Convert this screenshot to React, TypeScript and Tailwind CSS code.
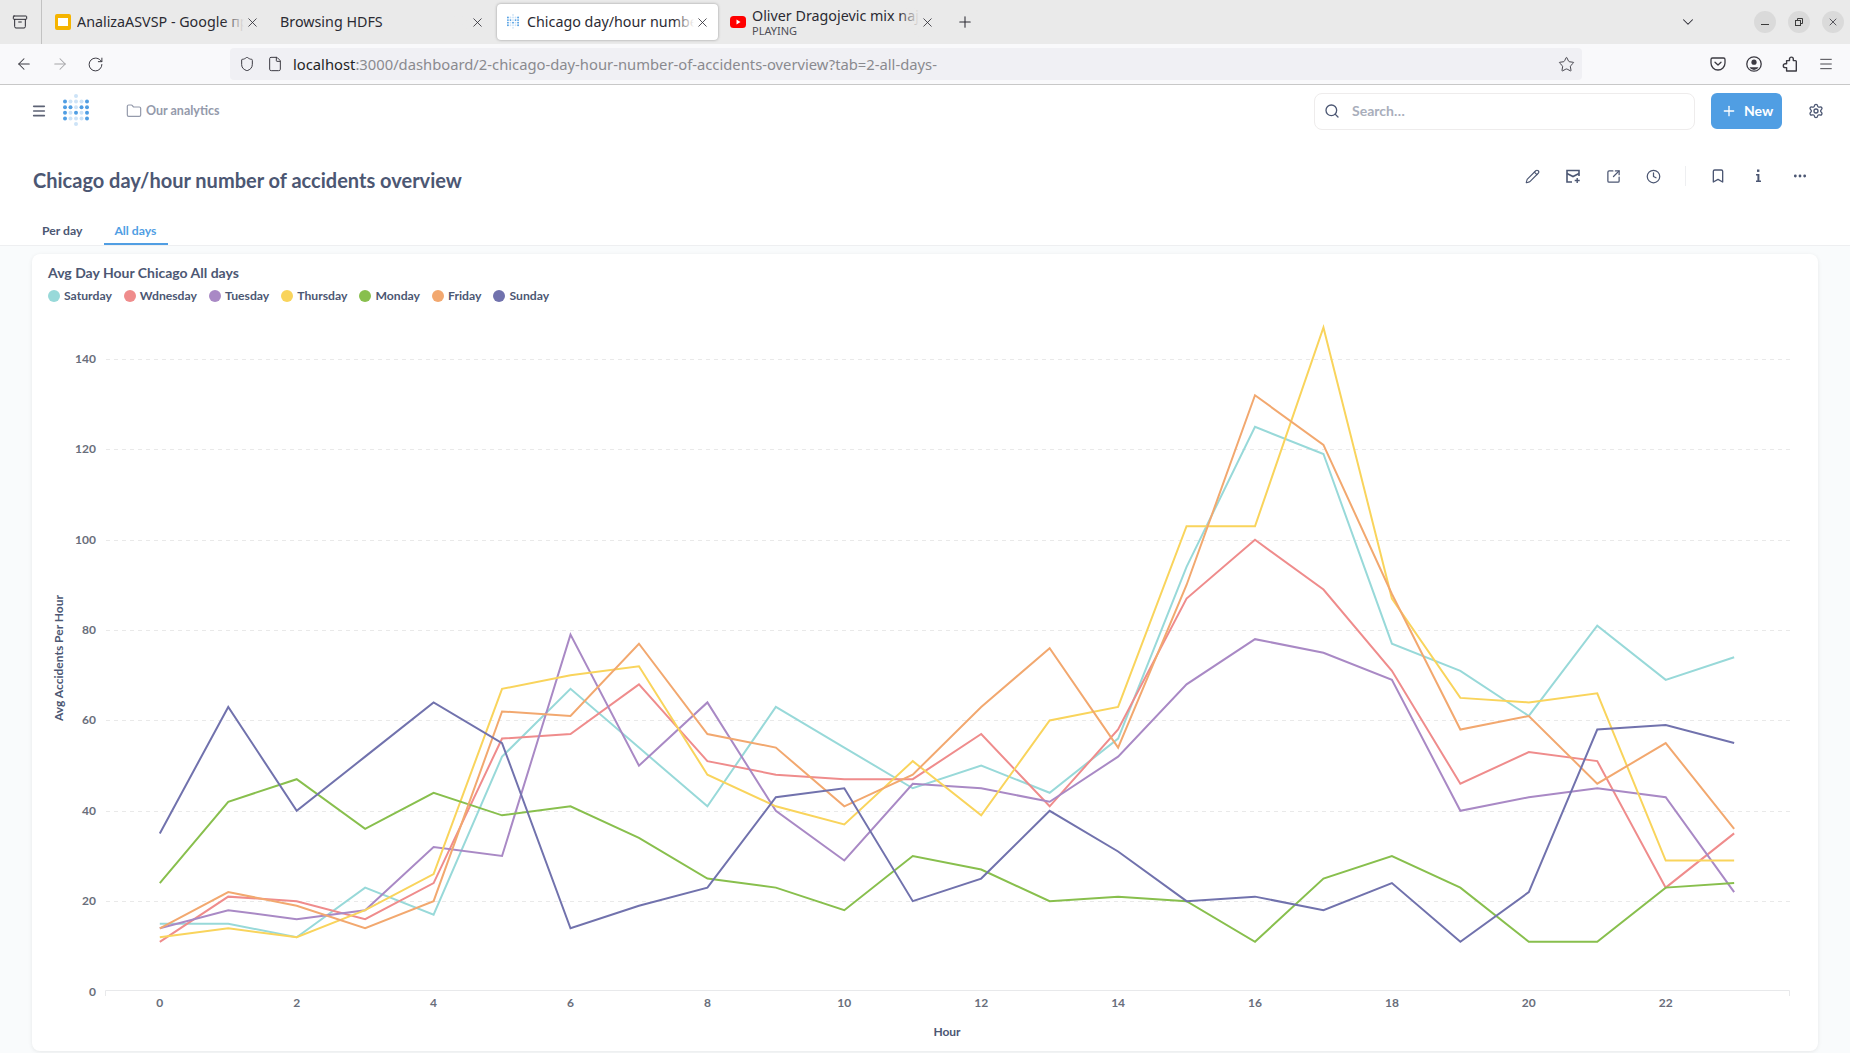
import {
  ArrowLeft,
  ArrowRight,
  Archive,
  Bookmark,
  ChevronDown,
  Clock,
  Ellipsis,
  File,
  Folder,
  Menu,
  Pencil,
  Plus,
  RotateCw,
  Search,
  Settings,
  Shield,
  SquareArrowOutUpRight,
  Star,
  X,
} from 'lucide-react';

const series = [
  { name: 'Saturday', color: '#98D9D9', values: [15, 15, 12, 23, 17, 52, 67, 54, 41, 63, 54, 45, 50, 44, 56, 94, 125, 119, 77, 71, 61, 81, 69, 74] },
  { name: 'Wdnesday', color: '#EF8C8C', values: [11, 21, 20, 16, 24, 56, 57, 68, 51, 48, 47, 47, 57, 41, 58, 87, 100, 89, 71, 46, 53, 51, 23, 35] },
  { name: 'Tuesday', color: '#A989C5', values: [14, 18, 16, 18, 32, 30, 79, 50, 64, 40, 29, 46, 45, 42, 52, 68, 78, 75, 69, 40, 43, 45, 43, 22] },
  { name: 'Thursday', color: '#F9D45C', values: [12, 14, 12, 18, 26, 67, 70, 72, 48, 41, 37, 51, 39, 60, 63, 103, 103, 147, 87, 65, 64, 66, 29, 29] },
  { name: 'Monday', color: '#88BF4D', values: [24, 42, 47, 36, 44, 39, 41, 34, 25, 23, 18, 30, 27, 20, 21, 20, 11, 25, 30, 23, 11, 11, 23, 24] },
  { name: 'Friday', color: '#F2A86F', values: [14, 22, 19, 14, 20, 62, 61, 77, 57, 54, 41, 48, 63, 76, 54, 90, 132, 121, 88, 58, 61, 46, 55, 36] },
  { name: 'Sunday', color: '#7172AD', values: [35, 63, 40, 52, 64, 55, 14, 19, 23, 43, 45, 20, 25, 40, 31, 20, 21, 18, 24, 11, 22, 58, 59, 55] },
];

// chart svg sits at x=32, y=310 of the page
const xAt = (h: number) => 127.8 + h * 68.45;
const yAt = (v: number) => 681.5 - v * 4.517;

const logoRows = [
  [0, 0, 1, 0, 0],
  [2, 1, 1, 1, 2],
  [2, 2, 1, 2, 2],
  [2, 1, 2, 1, 2],
  [2, 1, 1, 1, 2],
  [0, 0, 1, 0, 0],
];

function Logo({ size = 26 }: { size?: number }) {
  return (
    <svg width={size} height={(size * 34) / 26} viewBox="0 0 26 34" className="shrink-0">
      {logoRows.map((row, y) =>
        row.map((d, x) =>
          d ? <circle key={`${x}-${y}`} cx={2 + x * 5.5} cy={2 + y * 5.6} r={2} fill={d === 2 ? '#509EE3' : '#CDE3F7'} /> : null,
        ),
      )}
    </svg>
  );
}

function SlidesIcon() {
  return (
    <span className="w-4 h-4 shrink-0 rounded-[2px] bg-[#F5B400] flex items-center justify-center">
      <span className="w-[10px] h-[8px] bg-white" />
    </span>
  );
}

function YoutubeIcon() {
  return (
    <svg width="16" height="16" viewBox="0 0 16 16" className="shrink-0">
      <rect x="0" y="2" width="16" height="12" rx="3.5" fill="#FF0000" />
      <path d="M6.5 5.6v4.8L10.5 8z" fill="#fff" />
    </svg>
  );
}

interface TabProps {
  title: string;
  sub?: string;
  icon?: React.ReactNode;
  active?: boolean;
}

function Tab({ title, sub, icon, active }: TabProps) {
  return (
    <div
      className={`w-[221px] h-9 shrink-0 flex items-center pl-2 pr-2 rounded-[4px] ${
        active ? 'bg-white shadow-[0_0_3px_rgba(0,0,0,0.35)]' : ''
      }`}
    >
      {icon && <div className="w-4 flex justify-center shrink-0">{icon}</div>}
      <div className={`relative flex-1 min-w-0 overflow-hidden whitespace-nowrap ${icon ? 'ml-[6px]' : ''}`}>
        <div className="text-[14.3px] leading-[18px] text-[#2b2a33]">{title}</div>
        {sub && <div className="text-[11px] leading-[12px] text-[#4f4e57]">{sub}</div>}
        <div
          className={`absolute right-0 top-0 bottom-0 w-5 bg-gradient-to-r from-transparent ${
            active ? 'to-white' : 'to-[#eaeaea]'
          }`}
        />
      </div>
      <X size={15} strokeWidth={1.3} className="shrink-0 text-[#2b2a33] ml-[1px]" />
    </div>
  );
}

function WindowButton({ children }: { children: React.ReactNode }) {
  return <div className="w-[22px] h-[22px] rounded-full bg-[#dadada] flex items-center justify-center">{children}</div>;
}

function TabStrip() {
  return (
    <div className="h-[44px] bg-[#eaeaea] flex items-center shrink-0">
      <div className="w-[42px] h-full border-r border-[#c2c2c2] flex items-center justify-center pr-[2px]">
        <Archive size={16} strokeWidth={1.5} className="text-[#2b2a33]" />
      </div>
      <div className="flex items-center gap-1 ml-[5px]">
        <Tab title="AnalizaASVSP - Google презентације" icon={<SlidesIcon />} />
        <Tab title="Browsing HDFS" />
        <Tab title="Chicago day/hour number of accidents overview" icon={<Logo size={12} />} active />
        <Tab title="Oliver Dragojevic mix najlepsih pesama" sub="PLAYING" icon={<YoutubeIcon />} />
      </div>
      <Plus size={18} strokeWidth={1.4} className="ml-[13px] text-[#2b2a33]" />
      <div className="ml-auto flex items-center pr-[6px]">
        <ChevronDown size={18} strokeWidth={1.4} className="text-[#2b2a33] mr-[57px]" />
        <div className="flex items-center gap-3">
          <WindowButton>
            <span className="w-2 h-px bg-[#3a3a3a] mt-[4px]" />
          </WindowButton>
          <WindowButton>
            <svg width="10" height="10" viewBox="0 0 10 10" fill="none" stroke="#3a3a3a">
              <rect x="1.5" y="3.5" width="5" height="5" />
              <path d="M3.5 3.5v-2h5v5h-2" />
            </svg>
          </WindowButton>
          <WindowButton>
            <X size={12} strokeWidth={1.5} className="text-[#2b2a33]" />
          </WindowButton>
        </div>
      </div>
    </div>
  );
}

function PocketIcon() {
  return (
    <svg width="16" height="16" viewBox="0 0 16 16" fill="none" stroke="#3b3a42" strokeWidth="1.3" strokeLinecap="round" strokeLinejoin="round">
      <path d="M2.5 2h11A1.5 1.5 0 0 1 15 3.5V7A7 7 0 0 1 1 7V3.5A1.5 1.5 0 0 1 2.5 2z" />
      <path d="M5 6.2 8 9l3-2.8" />
    </svg>
  );
}

function ProfileIcon() {
  return (
    <svg width="16" height="16" viewBox="0 0 16 16" fill="none">
      <circle cx="8" cy="8" r="7.2" stroke="#3b3a42" strokeWidth="1.3" />
      <circle cx="8" cy="6.2" r="2.6" fill="#3b3a42" />
      <path d="M3.5 11.2h9a5 5 0 0 1-9 0z" fill="#3b3a42" />
    </svg>
  );
}

function PuzzleIcon() {
  return (
    <svg width="16" height="16" viewBox="0 0 16 16" fill="none" stroke="#3b3a42" strokeWidth="1.4" strokeLinejoin="round">
      <path d="M14.3 15H4.6v-3.4H3.2a1.9 1.9 0 0 1 0-3.8h1.4V4.6h2.9V3a1.9 1.9 0 0 1 3.8 0v1.6h2.2a.8.8 0 0 1 .8.8z" />
    </svg>
  );
}

function Toolbar() {
  return (
    <div className="h-[41px] bg-[#f9f9fb] border-b border-[#c8c8c8] flex items-center shrink-0 text-[#3b3a42]">
      <div className="flex items-center gap-[18px] pl-[15px]">
        <ArrowLeft size={18} strokeWidth={1.4} />
        <ArrowRight size={18} strokeWidth={1.4} className="text-[#a5a5a8]" />
        <RotateCw size={17} strokeWidth={1.4} />
      </div>
      <div className="ml-[126px] w-[1352px] h-8 rounded-[4px] bg-[#f0f0f4] flex items-center pl-[9px] pr-[7px]">
        <Shield size={16} strokeWidth={1.5} />
        <File size={16} strokeWidth={1.5} className="ml-3" />
        <div className="ml-[10px] text-[14.77px] whitespace-nowrap text-[#8a8a8f]">
          <span className="text-[#1f1f24]">localhost</span>:3000/dashboard/2-chicago-day-hour-number-of-accidents-overview?tab=2-all-days-
        </div>
        <Star size={17} strokeWidth={1.3} className="ml-auto" />
      </div>
      <div className="ml-[128px] flex items-center gap-[20px]">
        <PocketIcon />
        <ProfileIcon />
        <PuzzleIcon />
        <Menu size={16} strokeWidth={1.4} />
      </div>
    </div>
  );
}

function AppHeader() {
  return (
    <div className="h-[52px] flex items-center shrink-0 pl-[31px] pr-[26px]">
      <Menu size={16} strokeWidth={2.4} className="text-[#5c6274]" />
      <div className="ml-4">
        <Logo />
      </div>
      <div className="ml-[37px] flex items-center gap-1 text-[#949aab]">
        <Folder size={16} strokeWidth={1.8} />
        <span className="text-[12.5px] font-bold">Our analytics</span>
      </div>
      <div className="ml-auto flex items-center">
        <div className="w-[381px] h-[37px] rounded-lg border border-[#eeecec] bg-white flex items-center pl-[9px]">
          <Search size={16} strokeWidth={2} className="text-[#4c5773]" />
          <span className="ml-3 text-sm font-bold text-[#a9aebb]">Search…</span>
        </div>
        <div className="ml-4 w-[71px] h-9 rounded-md bg-[#509EE3] text-white flex items-center pl-[10px] gap-[7px]">
          <Plus size={16} strokeWidth={2} />
          <span className="text-sm font-bold">New</span>
        </div>
        <Settings size={16} strokeWidth={2} className="ml-[26px] text-[#4c5773]" />
      </div>
    </div>
  );
}

function AddToDashIcon() {
  return (
    <svg width="16" height="16" viewBox="0 0 16 16" fill="none" stroke="#4c5773" strokeWidth="1.6">
      <path d="M7 14H2V2.5h12V8" />
      <path d="M2 5.5 8 8.5l6-3" />
      <path d="M12.2 10v5M9.7 12.5h5" strokeWidth="1.4" />
    </svg>
  );
}

function InfoIcon() {
  return (
    <svg width="16" height="16" viewBox="0 0 16 16" fill="#4c5773">
      <rect x="7" y="1.5" width="2.4" height="2.4" />
      <path d="M6 6h3.4v6.5H11V14H6v-1.5h1.4V7.5H6z" />
    </svg>
  );
}

function PageHeader() {
  return (
    <div className="shrink-0 border-b border-[#eeeff1]">
      <div className="flex items-start pl-[33px] pr-[42px] pt-[28px]">
        <h1 className="text-[20px] leading-[30px] font-bold text-[#4c5773]">Chicago day/hour number of accidents overview</h1>
        <div className="ml-auto mt-[1px] h-5 flex items-center text-[#4c5773]">
          <Pencil size={15} strokeWidth={1.8} />
          <div className="ml-[25px]">
            <AddToDashIcon />
          </div>
          <SquareArrowOutUpRight size={15} strokeWidth={2} className="ml-[25px]" />
          <Clock size={15} strokeWidth={2} className="ml-[25px]" />
          <div className="ml-[24px] w-px h-5 bg-[#eeeff1]" />
          <Bookmark size={16} strokeWidth={2} className="ml-[24px]" />
          <div className="ml-6">
            <InfoIcon />
          </div>
          <Ellipsis size={16} strokeWidth={2.2} className="ml-[26px]" />
        </div>
      </div>
      <div className="flex pl-[32px] gap-3 mt-[17px] text-[12.2px] font-bold h-[33px]">
        <div className="px-[10px] pt-[10px] text-[#4c5773]">Per day</div>
        <div className="pl-[10px] pr-3 pt-[10px] text-[#509EE3] border-b-2 border-[#509EE3]">All days</div>
      </div>
    </div>
  );
}

function Legend() {
  return (
    <div className="flex items-center gap-3 mt-[6px] h-4">
      {series.map((s) => (
        <div key={s.name} className="flex items-center gap-1">
          <span className="w-3 h-3 rounded-full" style={{ backgroundColor: s.color }} />
          <span className="text-[12.2px] font-bold text-[#4c5773]">{s.name}</span>
        </div>
      ))}
    </div>
  );
}

function Chart() {
  const ticks = [0, 20, 40, 60, 80, 100, 120, 140];
  const hours = Array.from({ length: 12 }, (_, i) => i * 2);
  const tickText = { fontSize: 12, fontWeight: 700, fill: '#696E7B' };
  return (
    <svg width="1786" height="741" viewBox="0 0 1786 741" className="block" fontFamily="Lato, sans-serif">
      {ticks.slice(1).map((t) => (
        <line key={t} x1={74} x2={1758} y1={Math.round(yAt(t)) + 0.5} y2={Math.round(yAt(t)) + 0.5} stroke="#E9E9E9" strokeDasharray="4 4" />
      ))}
      <path d="M73.5 686V680.5H1757.5V686" fill="none" stroke="#E8E9EB" />
      {ticks.map((t) => (
        <text key={t} x={64} y={yAt(t) + 4} textAnchor="end" {...tickText}>
          {t}
        </text>
      ))}
      {hours.map((h) => (
        <text key={h} x={xAt(h)} y={697} textAnchor="middle" {...tickText}>
          {h}
        </text>
      ))}
      <text x={915} y={726} textAnchor="middle" fontSize={12} fontWeight={700} fill="#4C5773">
        Hour
      </text>
      <text transform="translate(31 348) rotate(-90)" textAnchor="middle" fontSize={12} fontWeight={700} fill="#4C5773">
        Avg Accidents Per Hour
      </text>
      {series.map((s) => (
        <polyline
          key={s.name}
          points={s.values.map((v, h) => `${xAt(h)},${yAt(v)}`).join(' ')}
          fill="none"
          stroke={s.color}
          strokeWidth={2}
          strokeLinejoin="miter"
        />
      ))}
    </svg>
  );
}

export default function App() {
  return (
    <div className="w-full h-screen overflow-hidden flex flex-col bg-white font-['Noto_Sans',sans-serif]">
      <TabStrip />
      <Toolbar />
      <div className="flex-1 min-h-0 flex flex-col font-['Lato',sans-serif]">
        <AppHeader />
        <PageHeader />
        <div className="flex-1 min-h-0 bg-[#f9fbfc] px-8 pt-2 pb-[2px]">
          <div className="h-full rounded-lg bg-white shadow-[0_1px_4px_rgba(0,0,0,0.08)] overflow-hidden">
            <div className="pl-4 pt-[10px] h-[56px]">
              <div className="text-[14px] leading-[18px] font-bold text-[#4c5773]">Avg Day Hour Chicago All days</div>
              <Legend />
            </div>
            <Chart />
          </div>
        </div>
      </div>
    </div>
  );
}
